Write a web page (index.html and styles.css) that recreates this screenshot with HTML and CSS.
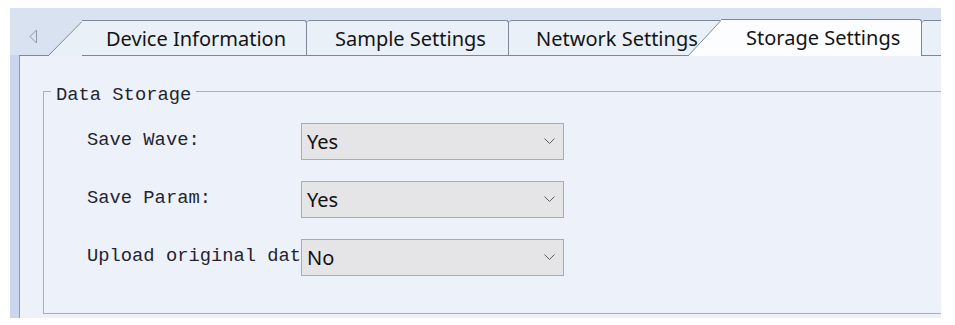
FILE: index.html
```html
<!DOCTYPE html>
<html>
<head>
    <meta charset="UTF-8">
    <title>Storage Settings</title>
    <link rel="stylesheet" href="styles.css">
</head>
<body>
    <div class="window">
        <div class="tabstrip">
            <svg class="scroll-left" width="9" height="15" viewBox="0 0 9 15">
                <polygon points="1,7.5 7.5,1 7.5,14" fill="none" stroke="#9098a8" stroke-width="1"/>
            </svg>
            <div class="tab tab-first">
                <svg class="slant slant-first" width="34" height="35" viewBox="0 0 34 35">
                    <polygon points="0,35 34,0 34,35" fill="#eaf0f8"/>
                    <line x1="0" y1="35" x2="34" y2="0.5" stroke="#7d8797" stroke-width="1"/>
                </svg>
                Device Information
            </div>
            <div class="tab tab-second">Sample Settings</div>
            <div class="tab tab-third">Network Settings</div>
            <div class="tab tab-active">
                <svg class="slant slant-active" width="33" height="36" viewBox="0 0 33 36">
                    <polygon points="0,36 33,0 33,36" fill="#fcfdff"/>
                    <line x1="0" y1="36" x2="33" y2="0.5" stroke="#7d8797" stroke-width="1"/>
                </svg>
                Storage Settings
            </div>
            <div class="tab tab-more"></div>
        </div>

        <div class="body">
            <div class="sidebar"></div>
            <div class="panel">
                <fieldset class="group">
                    <legend>Data Storage</legend>
                    <div class="group-rows">
                        <div class="row">
                            <label class="field-label">Save Wave:</label>
                            <div class="combo">
                                <span>Yes</span>
                                <svg class="chevron" width="11" height="7" viewBox="0 0 11 7">
                                    <polyline points="0.5,0.5 5.5,5.5 10.5,0.5" fill="none" stroke="#5a5a5a" stroke-width="1"/>
                                </svg>
                            </div>
                        </div>
                        <div class="row">
                            <label class="field-label">Save Param:</label>
                            <div class="combo">
                                <span>Yes</span>
                                <svg class="chevron" width="11" height="7" viewBox="0 0 11 7">
                                    <polyline points="0.5,0.5 5.5,5.5 10.5,0.5" fill="none" stroke="#5a5a5a" stroke-width="1"/>
                                </svg>
                            </div>
                        </div>
                        <div class="row">
                            <label class="field-label">Upload original data:</label>
                            <div class="combo">
                                <span>No</span>
                                <svg class="chevron" width="11" height="7" viewBox="0 0 11 7">
                                    <polyline points="0.5,0.5 5.5,5.5 10.5,0.5" fill="none" stroke="#5a5a5a" stroke-width="1"/>
                                </svg>
                            </div>
                        </div>
                    </div>
                </fieldset>
            </div>
        </div>
    </div>
</body>
</html>
```

FILE: styles.css
```css
* {
    margin: 0;
    padding: 0;
    box-sizing: border-box;
}

body {
    background: #ffffff;
    font-family: 'Noto Sans', sans-serif;
    color: #1c1c1c;
}

.window {
    margin: 8px 0 0 10px;
    width: 931px;
    height: 310px;
    display: flex;
    flex-direction: column;
    background: #d9e2f1;
    overflow: hidden;
}

/* tab header */
.tabstrip {
    height: 47px;
    display: flex;
    align-items: flex-end;
    flex-shrink: 0;
}

.scroll-left {
    align-self: flex-start;
    flex-shrink: 0;
    margin: 21px 0 0 19px;
}

.tab {
    position: relative;
    height: 35px;
    display: flex;
    align-items: center;
    flex-shrink: 0;
    white-space: nowrap;
    font-size: 20px;
    line-height: 27px;
    color: #141414;
    background: #eaf0f8;
    border-top: 1px solid #7d8797;
    border-right: 1px solid #7d8797;
    border-top-left-radius: 3px;
    border-top-right-radius: 3px;
}

.slant {
    position: absolute;
    bottom: 0;
}

.tab-first {
    margin-left: 44px;
    width: 225px;
    padding-left: 24px;
    border-top-left-radius: 0;
}

.slant-first {
    left: -34px;
    bottom: -1px;
}

.tab-second {
    width: 202px;
    padding-left: 28px;
}

.tab-third {
    width: 212px;
    padding-left: 27px;
    border-top-right-radius: 0;
}

.tab-active {
    z-index: 2;
    width: 201px;
    height: 37px;
    margin-bottom: -1px;
    padding-left: 25px;
    padding-bottom: 2px;
    background: #fcfdff;
    border-top-left-radius: 0;
}

.slant-active {
    left: -33px;
    bottom: 0;
}

.tab-more {
    width: 60px;
    border-right: none;
    border-top-right-radius: 0;
}

/* content */
.body {
    flex: 1;
    display: flex;
    min-height: 0;
}

.sidebar {
    width: 9px;
    flex-shrink: 0;
    background: #c9d6ee;
}

.panel {
    flex: 1;
    background: #edf2fa;
    border-left: 1px solid #8e98a8;
    border-top: 1px solid #7d8797;
    padding: 21px 0 0 23px;
    overflow: hidden;
}

.group {
    width: 1000px;
    height: 237px;
    border: 1px solid #a9b0bb;
    font-family: 'Liberation Mono', monospace;
    font-size: 18.8px;
    color: #1f2430;
}

.group legend {
    margin-left: 7px;
    padding: 8px 5px 0;
    line-height: 21px;
}

.group-rows {
    padding: 17px 0 0 43px;
}

.row {
    display: flex;
    align-items: center;
    height: 37px;
    margin-bottom: 21px;
}

.field-label {
    width: 214px;
    flex-shrink: 0;
    white-space: nowrap;
    overflow: hidden;
    margin-bottom: 4px;
}

.combo {
    width: 263px;
    height: 37px;
    display: flex;
    align-items: center;
    justify-content: space-between;
    padding: 0 8px 0 5px;
    background: #e5e4e7;
    border: 1px solid #acacb0;
    font-family: 'Noto Sans', sans-serif;
    font-size: 20px;
    color: #111111;
}
```
